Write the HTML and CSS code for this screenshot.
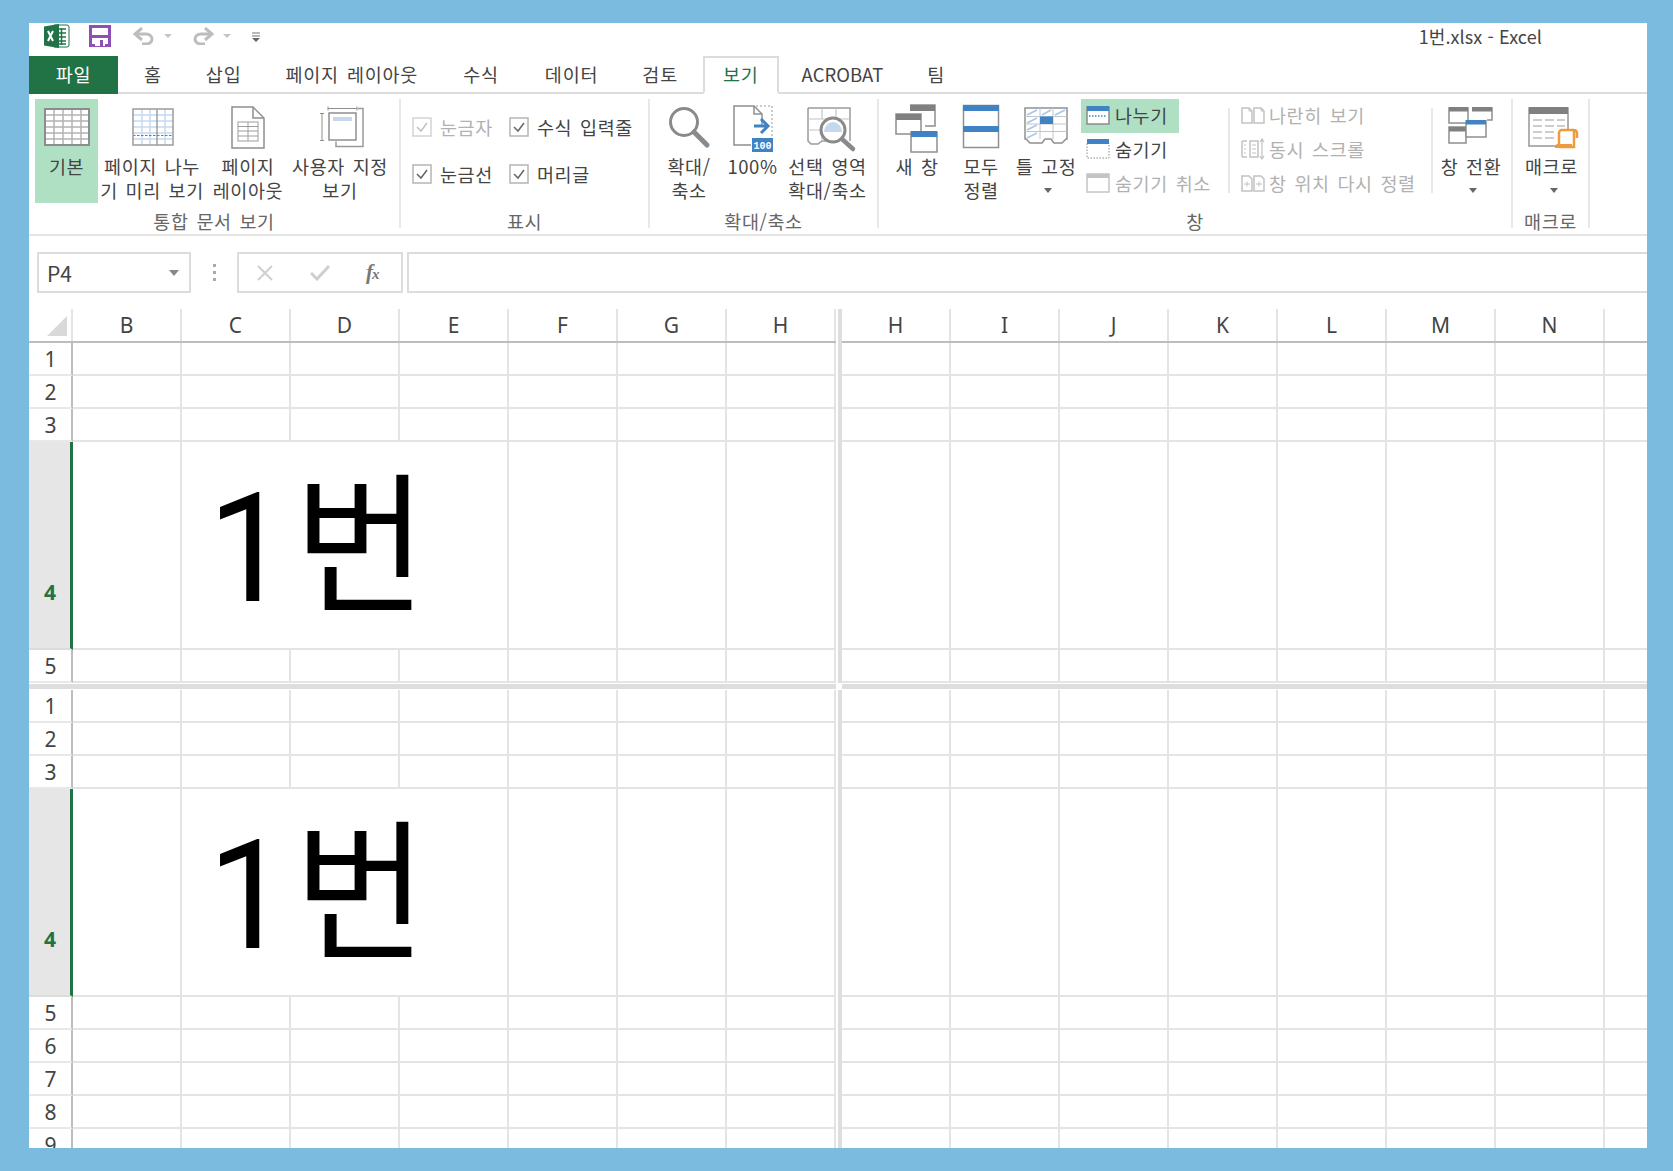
FILE: index.html
```html
<!DOCTYPE html>
<html lang="ko">
<head>
<meta charset="utf-8">
<title>1번.xlsx - Excel</title>
<link rel="stylesheet" href="styles.css">
</head>
<body>
<div class="window">
  <header class="titlebar">
    <div class="qat">
      <svg class="q-logo" viewBox="0 0 26 24"><path d="M10 1h13a2 2 0 0 1 2 2v18a2 2 0 0 1-2 2H10z" fill="#fff" stroke="#217346"/><path d="M14 5h8M14 9h8M14 13h8M14 17h8M14 20h8M17.500 4v17" stroke="#217346" stroke-width="1.500"/><path d="M0 2.500 15 0v24L0 21.500z" fill="#217346"/><path d="M4 7l5 10M9 7l-5 10" stroke="#fff" stroke-width="2"/></svg>
      <svg class="q-save" viewBox="0 0 22 22"><path d="M1.500 1.500h19v19h-19z" fill="#fff" stroke="#8f4fb5" stroke-width="3"/><path d="M2 10h18v3H2z" fill="#8f4fb5"/><path d="M6 13h10v8H6z" fill="#fff"/><path d="M11 15h3v6h-3z" fill="#8f4fb5"/></svg>
      <svg class="q-undo" viewBox="0 0 22 18"><path d="M3 7h10a6 5 0 0 1 0 10H9" fill="none" stroke="#bdbdbd" stroke-width="3"/><path d="M9 1 2 7l7 6" fill="none" stroke="#bdbdbd" stroke-width="3"/></svg>
      <span class="q-caret"></span>
      <svg class="q-redo" viewBox="0 0 22 18"><path d="M19 7H9a6 5 0 0 0 0 10h4" fill="none" stroke="#bdbdbd" stroke-width="3"/><path d="M13 1l7 6-7 6" fill="none" stroke="#bdbdbd" stroke-width="3"/></svg>
      <span class="q-caret"></span>
      <svg class="q-more" viewBox="0 0 8 10"><path d="M0 1h8M0 4h8" stroke="#777" stroke-width="1.200"/><path d="M0 6h8L4 10z" fill="#666"/></svg>
    </div>
    <div class="doc-title">1번.xlsx - Excel</div>
  </header>

  <nav class="tabs">
    <div class="tab-file">파일</div>
    <div class="tab t1">홈</div>
    <div class="tab">삽입</div>
    <div class="tab">페이지 레이아웃</div>
    <div class="tab t3">수식</div>
    <div class="tab t4">데이터</div>
    <div class="tab t2">검토</div>
    <div class="tab tab-active">보기</div>
    <div class="tab tab-en">ACROBAT</div>
    <div class="tab">팀</div>
  </nav>

  <section class="ribbon">
    <div class="group g1">
      <div class="group-body">
        <div class="btn b-normal on">
          <svg class="ico" viewBox="0 0 60 56"><rect x="8" y="10" width="44" height="36" fill="#fff"/><path d="M8 16h44M8 22h44M8 28h44M8 34h44M8 40h44M17 10v36M26 10v36M35 10v36M44 10v36" stroke="#b3b3b3" stroke-width="1.500"/><rect x="8" y="10" width="44" height="36" fill="none" stroke="#8c8c8c" stroke-width="2"/></svg>
          <span>기본</span>
        </div>
        <div class="btn b-break">
          <svg class="ico" viewBox="0 0 60 56"><rect x="11" y="10" width="40" height="36" fill="#fff"/><path d="M11 16h40M11 22h40M11 28h40M11 34h40M11 40h40M20 10v36M28 10v36M43 10v36" stroke="#c5daf0" stroke-width="1.500"/><path d="M11 36.500h40" stroke="#777" stroke-width="1" stroke-dasharray="2.500 1.500"/><path d="M35 10v36" stroke="#888" stroke-width="1.200"/><rect x="11" y="10" width="40" height="36" fill="none" stroke="#9c9c9c" stroke-width="1.500"/></svg>
          <span>페이지 나누<br>기 미리 보기</span>
        </div>
        <div class="btn b-layout">
          <svg class="ico" viewBox="0 0 60 56"><path d="M14 8h21l11 11v30H14z" fill="#fff" stroke="#8f8f8f" stroke-width="1.500"/><path d="M35 8v11h11" fill="none" stroke="#8f8f8f" stroke-width="1.500"/><rect x="20" y="23" width="20" height="19" fill="none" stroke="#9d9d9d"/><path d="M20 27.500h20M20 32h20M20 37h20M30 23v19" stroke="#9d9d9d"/></svg>
          <span>페이지<br>레이아웃</span>
        </div>
        <div class="btn b-custom">
          <svg class="ico" viewBox="0 0 60 56"><path d="M18 9.500h29M18 7.500v4M47 7.500v4M12 14v27M10 14.500h4M10 41.500h4" stroke="#8f8f8f" fill="none"/><path d="M48 9.500h5v38H26v-5" fill="none" stroke="#9a9a9a" stroke-width="1.500"/><rect x="19" y="14" width="27" height="27" fill="#fff" stroke="#8f8f8f" stroke-width="1.500"/><rect x="23" y="18" width="19" height="4" fill="#c5d8ec"/></svg>
          <span>사용자 지정<br>보기</span>
        </div>
      </div>
      <div class="group-label">통합 문서 보기</div>
    </div>

    <div class="group g2">
      <div class="checks">
        <label class="check off"><svg class="box" viewBox="0 0 20 20"><path d="M1 1h18v18H1z" fill="#fff" stroke="#d4d4d4" stroke-width="1.500"/><path d="M5 10l4 4 6-8" fill="none" stroke="#c2c2c2" stroke-width="1.500"/></svg>눈금자</label>
        <label class="check"><svg class="box" viewBox="0 0 20 20"><path d="M1 1h18v18H1z" fill="#fff" stroke="#b5b5b5" stroke-width="1.500"/><path d="M5 10l4 4 6-8" fill="none" stroke="#666" stroke-width="1.500"/></svg>수식 입력줄</label>
        <label class="check"><svg class="box" viewBox="0 0 20 20"><path d="M1 1h18v18H1z" fill="#fff" stroke="#b5b5b5" stroke-width="1.500"/><path d="M5 10l4 4 6-8" fill="none" stroke="#666" stroke-width="1.500"/></svg>눈금선</label>
        <label class="check"><svg class="box" viewBox="0 0 20 20"><path d="M1 1h18v18H1z" fill="#fff" stroke="#b5b5b5" stroke-width="1.500"/><path d="M5 10l4 4 6-8" fill="none" stroke="#666" stroke-width="1.500"/></svg>머리글</label>
      </div>
      <div class="group-label">표시</div>
    </div>

    <div class="group g3">
      <div class="group-body">
        <div class="btn b-zoom">
          <svg class="ico" viewBox="0 0 60 56"><circle cx="25" cy="23" r="13.500" fill="#fff" stroke="#8a8a8a" stroke-width="3"/><path d="M35 33l13 13" stroke="#8a8a8a" stroke-width="5" stroke-linecap="round"/></svg>
          <span>확대/<br>축소</span>
        </div>
        <div class="btn b-100">
          <svg class="ico" viewBox="0 0 60 56"><path d="M28 46H11V7h20l8 8v11" fill="#fff" stroke="#8f8f8f" stroke-width="1.500"/><path d="M31 7v8h8" fill="none" stroke="#8f8f8f" stroke-width="1.500"/><path d="M33 7h16v32" fill="none" stroke="#999" stroke-dasharray="2 2"/><path d="M31 27h14M38 20l7 7-7 7" fill="none" stroke="#3f83c4" stroke-width="3"/><rect x="29" y="39" width="21" height="14" fill="#3f83c4"/><text x="39.500" y="50" class="badge">100</text></svg>
          <span>100%</span>
        </div>
        <div class="btn b-sel">
          <svg class="ico" viewBox="0 0 60 56"><path d="M10 9h42v33M10 9v33l3 3h7l4-3h6" fill="#fff" stroke="#9a9a9a" stroke-width="1.500"/><path d="M10 20h42M10 31h20M24 9v11M38 9v11M24 31v11" stroke="#c4c4c4" stroke-width="1.200"/><circle cx="35" cy="31" r="12" fill="#fff" stroke="#8a8a8a" stroke-width="3"/><path d="M26 33a9 10 0 0 1 18 0z" fill="#c5d9ee"/><path d="M44 40l11 10" stroke="#8a8a8a" stroke-width="4.500" stroke-linecap="round"/></svg>
          <span>선택 영역<br>확대/축소</span>
        </div>
      </div>
      <div class="group-label">확대/축소</div>
    </div>

    <div class="group g4">
      <div class="group-body">
        <div class="btn b-new">
          <svg class="ico" viewBox="0 0 60 56"><path d="M23 6h25v21H38" fill="#fff" stroke="#8f8f8f" stroke-width="1.500"/><rect x="23" y="6" width="25" height="6" fill="#808080"/><path d="M9 15h25v20H9z" fill="#fff" stroke="#8f8f8f" stroke-width="1.500"/><rect x="9" y="15" width="25" height="6" fill="#808080"/><path d="M24 33h26v20H24z" fill="#fff" stroke="#8f8f8f" stroke-width="1.500"/><rect x="24" y="32" width="26" height="6" fill="#3f83c4"/></svg>
          <span>새 창</span>
        </div>
        <div class="btn b-arr">
          <svg class="ico" viewBox="0 0 60 56"><rect x="12.500" y="6.500" width="35" height="42" fill="#fff" stroke="#909090" stroke-width="1.500"/><rect x="12" y="6" width="36" height="6" fill="#3f83c4"/><rect x="12" y="27" width="36" height="6" fill="#3f83c4"/></svg>
          <span>모두<br>정렬</span>
        </div>
        <div class="btn b-frz">
          <svg class="ico" viewBox="0 0 60 56"><path d="M9 9h42v31h-1l-4 4h-8l-3-4h-6l-3 4H14l-4-4H9z" fill="#fff" stroke="#909090" stroke-width="1.500"/><path d="M9 17.500h42M9 25h42M9 32.500h42M24 9v31M37 9v31" stroke="#c4c4c4"/><path d="M11 16l10-5M26 16l9-5M39 16l10-5M11 24l10-5M11 31l10-5M11 39l10-5" stroke="#a8c8ea" stroke-width="1.800"/><rect x="24" y="17.500" width="13" height="7.500" fill="#3f83c4"/></svg>
          <span>틀 고정</span>
          <span class="caret-line"><i class="caret"></i></span>
        </div>
        <div class="small-col">
          <div class="small on">
            <svg class="sico" viewBox="0 0 24 20"><rect x="1" y="2" width="22" height="17" fill="#fff" stroke="#8a8a8a" stroke-width="1.500"/><rect x="1" y="1" width="22" height="5" fill="#3f83c4"/><path d="M3 11h18" stroke="#3f83c4" stroke-width="1.500" stroke-dasharray="1.500 1.500"/></svg>
            <span>나누기</span>
          </div>
          <div class="small">
            <svg class="sico" viewBox="0 0 24 20"><rect x="1" y="4" width="22" height="15" fill="#fff" stroke="#8a8a8a" stroke-dasharray="1.500 1.500"/><rect x="1" y="0" width="22" height="5" fill="#3f83c4"/></svg>
            <span>숨기기</span>
          </div>
          <div class="small off">
            <svg class="sico" viewBox="0 0 24 20"><rect x="1" y="1" width="22" height="18" fill="#fff" stroke="#c4c4c4" stroke-width="1.500"/><rect x="1" y="1" width="22" height="4" fill="#c4c4c4"/></svg>
            <span>숨기기 취소</span>
          </div>
        </div>
        <i class="sep"></i>
        <div class="small-col col2">
          <div class="small off">
            <svg class="sico2" viewBox="0 0 24 18"><path d="M1 2h7l3 3v12H1zM13 2h7l3 3v12H13z" fill="#fff" stroke="#c2c2c2" stroke-width="1.500"/><path d="M8 2v3h3M20 2v3h3" fill="none" stroke="#c2c2c2"/></svg>
            <span>나란히 보기</span>
          </div>
          <div class="small off">
            <svg class="sico2" viewBox="0 0 24 22"><path d="M1 3h5M1 19h5M1 3v16" fill="none" stroke="#c2c2c2" stroke-width="1.500"/><path d="M9 3h8v16H9z" fill="#fff" stroke="#c2c2c2" stroke-width="1.500"/><path d="M3 7h2M3 11h2M3 15h2M11 7h4M11 11h4M11 15h4" stroke="#c2c2c2"/><path d="M21 1v20M19 4l2-3 2 3M19 18l2 3 2-3" fill="none" stroke="#c2c2c2" stroke-width="1.200"/></svg>
            <span>동시 스크롤</span>
          </div>
          <div class="small off">
            <svg class="sico2" viewBox="0 0 24 18"><path d="M1 2h7l3 3v12H1zM13 2h7l3 3v12H13z" fill="#fff" stroke="#c2c2c2" stroke-width="1.500"/><path d="M3 10h6M6 7.500v5M15 10h6M18 7.500v5" stroke="#c2c2c2"/></svg>
            <span>창 위치 다시 정렬</span>
          </div>
        </div>
        <i class="sep"></i>
        <div class="btn b-switch">
          <svg class="ico" viewBox="0 0 60 56"><path d="M8 9h19v15H8z" fill="#fff" stroke="#8f8f8f" stroke-width="1.500"/><rect x="8" y="8" width="19" height="4.500" fill="#808080"/><path d="M31 9h20v12h-5" fill="#fff" stroke="#8f8f8f" stroke-width="1.500"/><rect x="31" y="8" width="20" height="4.500" fill="#808080"/><path d="M8 28h17v16H8z" fill="#fff" stroke="#8f8f8f" stroke-width="1.500"/><rect x="8" y="28" width="17" height="4.500" fill="#808080"/><rect x="25" y="22" width="20" height="16" fill="#fff" stroke="#8f8f8f" stroke-width="1.500"/><rect x="25" y="21" width="20" height="4.500" fill="#3f83c4"/></svg>
          <span>창 전환</span>
          <span class="caret-line"><i class="caret"></i></span>
        </div>
      </div>
      <div class="group-label">창</div>
    </div>

    <div class="group g5">
      <div class="group-body">
        <div class="btn b-macro">
          <svg class="ico" viewBox="0 0 60 56"><rect x="7" y="9" width="39" height="38" fill="#fff" stroke="#969696" stroke-width="1.500"/><rect x="7" y="8" width="39" height="7" fill="#808080"/><path d="M11 21h9M23 21h9M35 21h8M11 27h9M23 27h9M35 27h8M11 33h9M23 33h9M11 39h9M23 39h9" stroke="#bdbdbd" stroke-width="1.500"/><path d="M37 45V34a3 3 0 0 1 3-3h12a3 3 0 0 1 3 3v5M52 31v17H38" fill="#fff" stroke="#ef9a3c" stroke-width="2.500"/><path d="M33 49a3 3 0 0 1 3-4h14v4z" fill="#ef9a3c"/></svg>
          <span>매크로</span>
          <span class="caret-line"><i class="caret"></i></span>
        </div>
      </div>
      <div class="group-label">매크로</div>
    </div>
  </section>

  <section class="formula">
    <div class="namebox"><span>P4</span><i class="name-caret"></i></div>
    <div class="grip"><i></i><i></i><i></i></div>
    <div class="fx-box">
      <svg class="f-x" viewBox="0 0 16 16"><path d="M1 1l14 14M15 1L1 15" stroke="#cfcfcf" stroke-width="2"/></svg>
      <svg class="f-c" viewBox="0 0 20 16"><path d="M1 8l6 6L19 1" fill="none" stroke="#cfcfcf" stroke-width="3"/></svg>
      <span class="f-fx">f<span class="f-sub">x</span></span>
    </div>
    <div class="input"></div>
  </section>

  <main class="sheet">
    <div class="pane">
      <div class="cols"><div class="corner"><i></i></div><div class="col">B</div><div class="col">C</div><div class="col">D</div><div class="col">E</div><div class="col">F</div><div class="col">G</div><div class="col">H</div></div>
      <div class="row"><div class="rh">1</div><div class="cells"></div></div>
      <div class="row"><div class="rh">2</div><div class="cells"></div></div>
      <div class="row"><div class="rh">3</div><div class="cells"></div></div>
      <div class="row row4"><div class="rh rh-sel">4</div><div class="cells cells-m"><div class="cell"></div><div class="cell merged"><span>1번</span></div><div class="cell"></div><div class="cell"></div><div class="cell"></div></div></div>
      <div class="row"><div class="rh">5</div><div class="cells"></div></div>
    </div>
    <div class="vsplit"></div>
    <div class="pane">
      <div class="cols"><div class="col">H</div><div class="col">I</div><div class="col">J</div><div class="col">K</div><div class="col">L</div><div class="col">M</div><div class="col">N</div><div class="col"></div></div>
      <div class="row"><div class="cells"></div></div>
      <div class="row"><div class="cells"></div></div>
      <div class="row"><div class="cells"></div></div>
      <div class="row row4"><div class="cells"></div></div>
      <div class="row"><div class="cells"></div></div>
    </div>

    <div class="hsplit"></div>
    <div class="cross"></div>
    <div class="hsplit"></div>

    <div class="pane">
      <div class="row"><div class="rh">1</div><div class="cells"></div></div>
      <div class="row"><div class="rh">2</div><div class="cells"></div></div>
      <div class="row"><div class="rh">3</div><div class="cells"></div></div>
      <div class="row row4"><div class="rh rh-sel">4</div><div class="cells cells-m"><div class="cell"></div><div class="cell merged"><span>1번</span></div><div class="cell"></div><div class="cell"></div><div class="cell"></div></div></div>
      <div class="row"><div class="rh">5</div><div class="cells"></div></div>
      <div class="row"><div class="rh">6</div><div class="cells"></div></div>
      <div class="row"><div class="rh">7</div><div class="cells"></div></div>
      <div class="row"><div class="rh">8</div><div class="cells"></div></div>
      <div class="row"><div class="rh">9</div><div class="cells"></div></div>
    </div>
    <div class="vsplit"></div>
    <div class="pane">
      <div class="row"><div class="cells"></div></div>
      <div class="row"><div class="cells"></div></div>
      <div class="row"><div class="cells"></div></div>
      <div class="row row4"><div class="cells"></div></div>
      <div class="row"><div class="cells"></div></div>
      <div class="row"><div class="cells"></div></div>
      <div class="row"><div class="cells"></div></div>
      <div class="row"><div class="cells"></div></div>
      <div class="row"><div class="cells"></div></div>
    </div>
  </main>
</div>
</body>
</html>
```
FILE: styles.css
```css
* { box-sizing: border-box; }
html, body { margin: 0; height: 100%; }
body {
  background: #7bbbdf;
  padding: 23px 26px 23px 29px;
  height: 1171px;
  overflow: hidden;
  font-family: "Noto Sans CJK KR", "Noto Sans", sans-serif;
  color: #444;
  font-size: 18.5px;
}
.window {
  width: 1618px;
  height: 1125px;
  background: #fff;
  display: flex;
  flex-direction: column;
  overflow: hidden;
}

/* title bar */
.titlebar { height: 33px; display: flex; justify-content: space-between; flex: none; }
.qat { display: flex; align-items: center; height: 25px; padding-left: 15px; }
.q-logo { width: 26px; height: 24px; }
.q-save { width: 22px; height: 22px; margin-left: 19px; }
.q-undo { width: 22px; height: 18px; margin-left: 22px; }
.q-redo { width: 22px; height: 18px; margin-left: 20px; }
.q-caret { width: 0; height: 0; margin-left: 9px; border: 4px solid transparent; border-top: 4px solid #c4c4c4; border-bottom: 0; }
.q-more { width: 8px; height: 10px; margin-left: 21px; margin-top: 2px; }
.doc-title { margin-right: 105px; font-size: 18px; line-height: 26px; letter-spacing: 0.1px; }

/* tabs */
.tabs { height: 38px; display: flex; flex: none; border-bottom: 2px solid #dcdcdc; letter-spacing: 0.8px; word-spacing: 2px; }
.tab-file { width: 89px; height: 38px; background: #217346; color: #fff; display: flex; align-items: center; justify-content: center; padding-bottom: 2px; }
.tab { height: 38px; padding: 0 22px 2px; display: flex; align-items: center; white-space: nowrap; }
.t1 { padding-left: 26px; }
.t2 { padding-right: 25px; }
.t3 { padding-left: 23px; }
.t4 { padding-left: 24px; }
.tab-active { color: #217346; padding: 0 18px 2px; border: 2px solid #dcdcdc; border-bottom: 2px solid #fff; }
.tab-en { letter-spacing: 0; padding-left: 23px; }

/* ribbon */
.ribbon { height: 142px; flex: none; display: flex; padding-top: 5px; border-bottom: 2px solid #e4e4e4; line-height: 24px; letter-spacing: 0.6px; word-spacing: 2px; }
.group { height: 129px; border-right: 2px solid #e8e8e8; display: flex; flex-direction: column; flex: none; }
.group-body { height: 104px; display: flex; flex: none; }
.group-label { margin-top: 6px; text-align: center; line-height: 24px; color: #666; white-space: nowrap; flex: none; }
.g1 { width: 372px; }
.g1 .group-body { padding-left: 6px; }
.g2 { width: 249px; }
.g3 { width: 229px; }
.g3 .group-body { padding-left: 8px; }
.g4 { width: 634px; }
.g4 .group-body { padding-left: 6px; }
.g5 { width: 77px; }

.btn { display: flex; flex-direction: column; align-items: center; text-align: center; flex: none; white-space: nowrap; }
.btn.on { background: #b0e0c4; }
.ico { width: 60px; height: 56px; flex: none; margin-bottom: -1px; }
.b-normal { width: 63px; }
.b-break { width: 108px; }
.b-layout { width: 84px; }
.b-custom { width: 100px; }
.b-zoom { width: 62px; }
.b-100 { width: 65px; }
.b-sel { width: 85px; }
.b-new { width: 64px; }
.b-arr { width: 64px; }
.b-frz { width: 66px; }
.b-switch { width: 76px; }
.b-macro { width: 77px; }
.badge { font: bold 10px "Liberation Mono", monospace; fill: #fff; text-anchor: middle; letter-spacing: 0; }
.caret-line { height: 24px; display: flex; align-items: center; padding-left: 4px; }
.caret { width: 0; height: 0; border: 4.500px solid transparent; border-top: 5px solid #666; border-bottom: 0; }

.checks { height: 104px; padding: 4px 0 0 11px; display: grid; grid-template-columns: 97px 130px; grid-auto-rows: 47px; flex: none; }
.check { display: flex; align-items: center; gap: 8px; white-space: nowrap; }
.check.off { color: #b1b1b1; }
.box { width: 20px; height: 20px; flex: none; }

.small-col { margin-left: 2px; width: 147px; flex: none; display: flex; flex-direction: column; }
.small { height: 34px; width: fit-content; padding: 0 11px 2px 5px; display: flex; align-items: center; gap: 5px; white-space: nowrap; flex: none; }
.small.on { background: #b0e0c4; }
.small.off { color: #b1b1b1; }
.sico { width: 24px; height: 20px; flex: none; }
.sico2 { width: 24px; height: 22px; flex: none; }
.col2 { width: 190px; margin-left: 11px; }
.col2 .small { gap: 4px; padding: 0 0 2px; }
.sep { width: 2px; height: 85px; margin-top: 9px; background: #e8e8e8; flex: none; }

/* formula bar */
.formula { height: 73px; flex: none; padding: 16px 0; display: flex; align-items: stretch; }
.namebox { width: 154px; margin-left: 8px; border: 2px solid #dcdcdc; display: flex; align-items: center; justify-content: space-between; padding: 0 10px 0 8px; font-size: 21px; flex: none; }
.name-caret { width: 0; height: 0; border: 5px solid transparent; border-top: 6px solid #888; border-bottom: 0; }
.grip { width: 46px; display: flex; flex-direction: column; align-items: center; justify-content: center; gap: 4px; flex: none; }
.grip i { width: 3px; height: 3px; background: #aaa; }
.fx-box { width: 166px; border: 2px solid #dcdcdc; display: flex; align-items: center; flex: none; }
.f-x { width: 16px; height: 16px; margin-left: 18px; }
.f-c { width: 20px; height: 16px; margin-left: 37px; }
.f-fx { margin-left: 36px; font: italic bold 21px "Liberation Serif", serif; color: #777; line-height: 24px; }
.f-sub { font-size: 15px; margin-left: -1px; }
.input { flex: 1; margin-left: 4px; border: 2px solid #dcdcdc; border-right: 0; }

/* sheet */
.sheet { flex: 1; min-height: 0; display: grid; grid-template-columns: 807px 6px 805px; grid-template-rows: 374px 7px 458px; }
.pane { overflow: hidden; min-width: 0; }
.vsplit { margin-left: 2px; background: #dedede; }
.hsplit { margin-top: 1px; height: 5px; background: #dedede; }
.cross { background: #fff; }
.cols { display: flex; height: 34px; border-bottom: 2px solid #bdbdbd; }
.corner { width: 44px; flex: none; border-right: 2px solid #e4e4e4; position: relative; }
.corner i { position: absolute; right: 4px; bottom: 5px; width: 0; height: 0; border-style: solid; border-width: 0 0 20px 20px; border-color: transparent transparent #d9d9d9 transparent; }
.col { width: 109px; flex: none; border-right: 2px solid #e4e4e4; display: flex; align-items: center; justify-content: center; font: 21px "Noto Sans", sans-serif; color: #444; line-height: 32px; }
.row { display: flex; height: 33px; }
.row4 { height: 208px; }
.rh { width: 44px; flex: none; border-right: 2px solid #bdbdbd; border-bottom: 2px solid #e8e8e8; display: flex; align-items: center; justify-content: center; padding-left: 1px; font: 21px "Noto Sans", sans-serif; color: #444; }
.rh-sel { background: #e6e6e6; color: #217346; font-weight: 700; border-right: 3px solid #217346; border-bottom-color: #dcdcdc; align-items: flex-end; padding-bottom: 42px; }
.cells { flex: 1; min-width: 0; border-bottom: 2px solid #e4e4e4; background: linear-gradient(to left, #e4e4e4 2px, transparent 2px) 0 0 / 109px 100%; }
.cells-m { display: flex; background: none; }
.cell { width: 109px; flex: none; border-right: 2px solid #e4e4e4; }
.merged { width: 327px; padding: 18px 0 0 26px; font-family: Roboto, "Noto Sans CJK KR", sans-serif; font-size: 144px; line-height: 190px; letter-spacing: 5px; color: #000; white-space: nowrap; }
.merged span { display: inline-block; transform: scaleY(1.06); transform-origin: 0 100%; }
```
